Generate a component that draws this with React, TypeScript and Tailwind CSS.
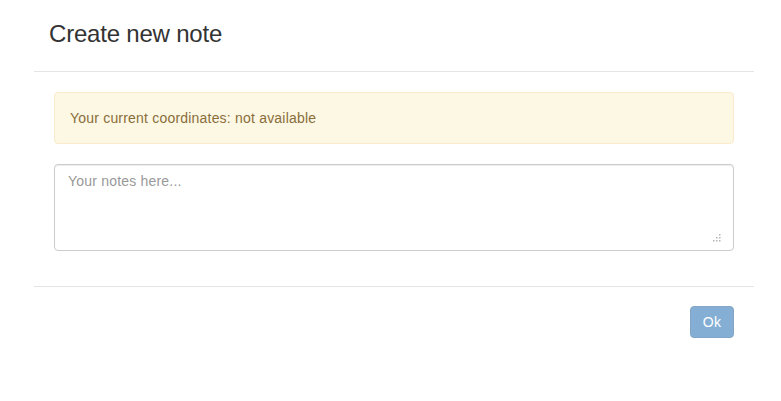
export default function App() {
  return (
    <div className="min-h-[401px] w-full bg-white pl-[34px] pr-[27px] font-['Liberation_Sans',Arial,sans-serif] text-[#333]">
      <div className="flex flex-col">
        {/* header */}
        <div className="border-b border-[#e5e5e5] px-[15px] pt-[21px] pb-[24px]">
          <h3 className="text-[24px] leading-[26px] tracking-[-0.2px] text-[#333]">Create new note</h3>
        </div>

        {/* body */}
        <div className="flex flex-col gap-[20px] px-[20px] pt-[20px] pb-[35px]">
          <div className="rounded-[4px] border border-[#faebcc] bg-[#fcf8e3] px-[15px] py-[15px] text-[14px] leading-[20px] tracking-[0.2px] text-[#8a6d3b]">
            Your current coordinates: not available
          </div>
          <div className="relative">
            <textarea
              className="block h-[87px] w-full resize-none rounded-[4px] border border-[#ccc] px-[13px] py-[6px] text-[14px] leading-[20px] tracking-[0.2px] text-[#555] shadow-[inset_0_1px_1px_rgba(0,0,0,0.075)] outline-none placeholder:text-[#999]"
              placeholder="Your notes here..."
            />
            {/* resize grip */}
            <svg className="pointer-events-none absolute right-[13px] bottom-[7px]" width="10" height="10" viewBox="0 0 10 10">
              <g fill="#b5b5b5">
                <rect x="8" y="0" width="1.5" height="1.5" />
                <rect x="5" y="3" width="1.5" height="1.5" />
                <rect x="8" y="3" width="1.5" height="1.5" />
                <rect x="2" y="6" width="1.5" height="1.5" />
                <rect x="5" y="6" width="1.5" height="1.5" />
                <rect x="8" y="6" width="1.5" height="1.5" />
              </g>
            </svg>
          </div>
        </div>

        {/* footer */}
        <div className="flex justify-end border-t border-[#e5e5e5] px-[20px] pt-[19px]">
          <button
            disabled
            className="h-[32px] w-[44px] rounded-[4px] border border-[#2e6da4] bg-[#337ab7] text-[14px] tracking-[0.2px] text-white opacity-60"
          >
            Ok
          </button>
        </div>
      </div>
    </div>
  );
}
